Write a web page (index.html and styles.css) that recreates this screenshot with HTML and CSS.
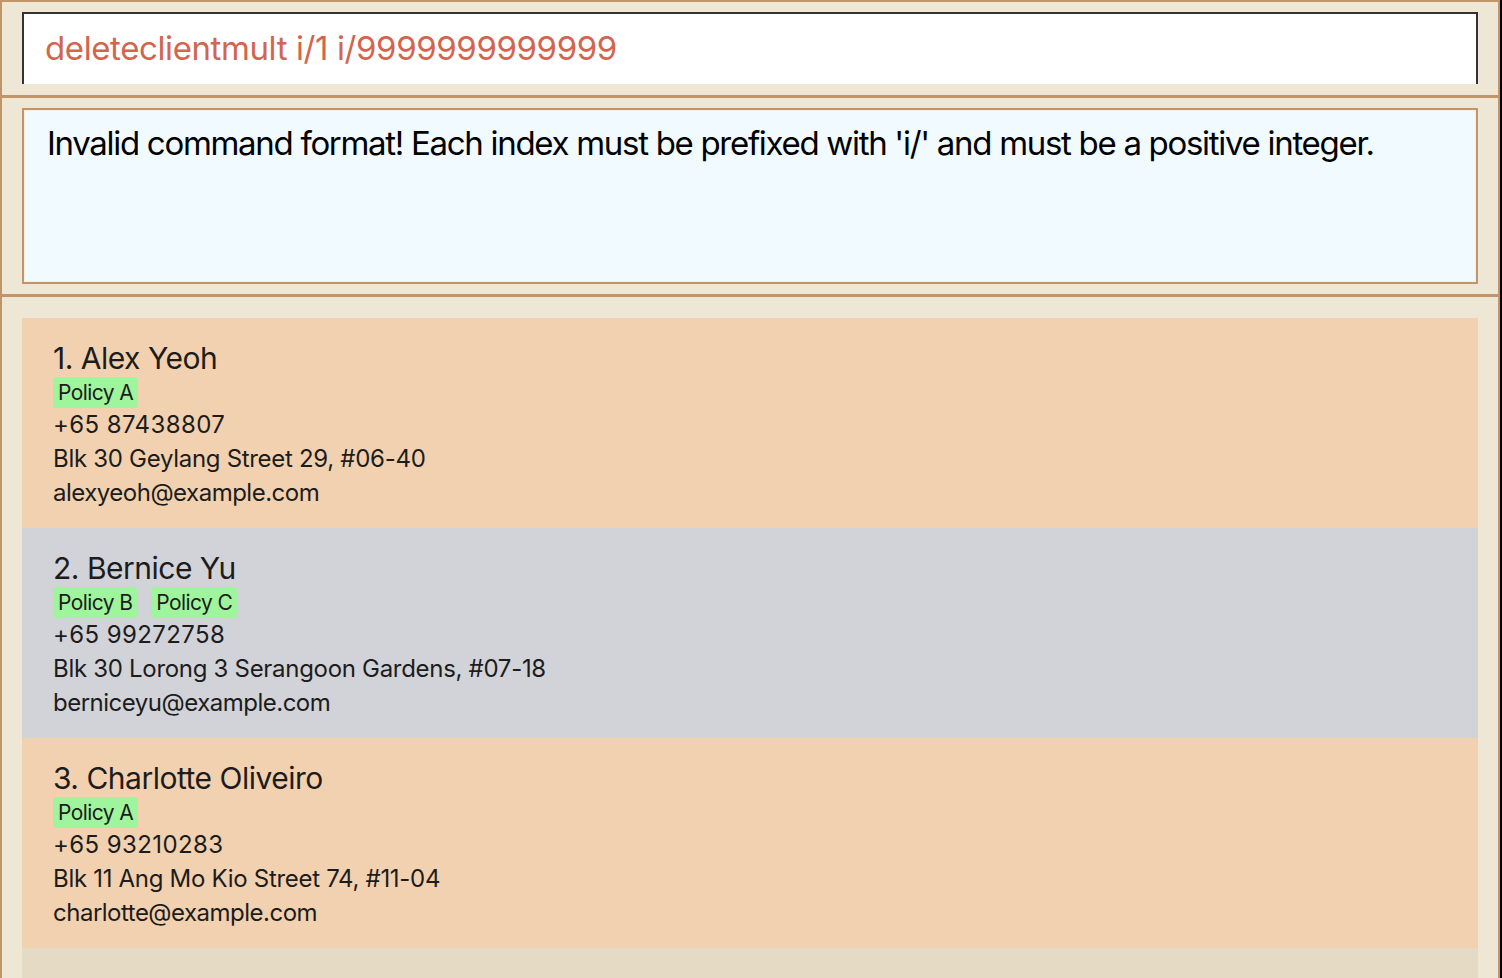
FILE: index.html
```html
<!DOCTYPE html>
<html>
<head>
<meta charset="utf-8">
<link rel="stylesheet" href="styles.css">
</head>
<body>
<div class="window">
  <div class="cmd-pane">
    <div class="cmd-box">deleteclientmult i/1 i/9999999999999</div>
  </div>
  <div class="sep"></div>
  <div class="result-pane">
    <div class="result-box">Invalid command format! Each index must be prefixed with 'i/' and must be a positive integer.</div>
  </div>
  <div class="sep"></div>
  <div class="list-pane">
    <div class="list">
      <div class="card odd">
        <div class="name">1. Alex Yeoh</div>
        <div class="tags"><span class="tag">Policy A</span></div>
        <div class="line phone">+65 87438807</div>
        <div class="line">Blk 30 Geylang Street 29, #06-40</div>
        <div class="line email">alexyeoh@example.com</div>
      </div>
      <div class="card even">
        <div class="name">2. Bernice Yu</div>
        <div class="tags"><span class="tag">Policy B</span><span class="tag">Policy C</span></div>
        <div class="line phone">+65 99272758</div>
        <div class="line">Blk 30 Lorong 3 Serangoon Gardens, #07-18</div>
        <div class="line email">berniceyu@example.com</div>
      </div>
      <div class="card odd">
        <div class="name">3. Charlotte Oliveiro</div>
        <div class="tags"><span class="tag">Policy A</span></div>
        <div class="line phone">+65 93210283</div>
        <div class="line">Blk 11 Ang Mo Kio Street 74, #11-04</div>
        <div class="line email">charlotte@example.com</div>
      </div>
      <div class="filler"></div>
    </div>
  </div>
</div>
</body>
</html>
```
FILE: styles.css
```css
html, body {
  margin: 0;
  padding: 0;
  width: 1502px;
  height: 978px;
  overflow: hidden;
  background: #000;
  font-family: Inter, "Noto Sans", sans-serif;
}
.window {
  box-sizing: border-box;
  width: 1500px;
  height: 978px;
  border-top: 2px solid #c1946a;
  border-left: 2px solid #c1946a;
  border-right: 2px solid #c1946a;
  background: #efe7d5;
  display: flex;
  flex-direction: column;
}
.cmd-pane {
  padding: 10px 20px 11px 20px;
}
.cmd-box {
  box-sizing: border-box;
  height: 72px;
  background: #fff;
  border: 2px solid #333;
  border-bottom: none;
  color: #d3654f;
  font-size: 33px;
  letter-spacing: -0.4px;
  padding: 14px 0 0 21px;
  line-height: 40px;
}
.sep {
  height: 3px;
  background: #c1946a;
}
.result-pane {
  padding: 10px 20px 10px 20px;
}
.result-box {
  box-sizing: border-box;
  height: 176px;
  border: 2px solid #c1946a;
  box-shadow: inset 0 0 0 1px #f6eee2;
  background: #f0faff;
  color: #000;
  font-size: 33px;
  letter-spacing: -1.3px;
  padding: 13px 0 0 23px;
  line-height: 40px;
}
.list-pane {
  flex: 1;
  padding: 21px 20px 0 20px;
  display: flex;
  flex-direction: column;
}
.list {
  flex: 1;
  display: flex;
  flex-direction: column;
}
.card {
  box-sizing: border-box;
  height: 210px;
  padding: 22px 0 0 31px;
  color: #1c1c1c;
}
.odd { background: #f2d1b0; }
.even { background: #d1d3d8; }
.filler {
  flex: 1;
  background: #e5dac4;
}
.name {
  font-size: 30px;
  line-height: 36px;
  letter-spacing: -0.5px;
}
.tags {
  display: flex;
  gap: 14px;
  height: 32px;
  align-items: center;
}
.tag {
  background: #9ff59c;
  border-radius: 3px;
  font-size: 21px;
  line-height: 31px;
  padding: 0 5px;
  letter-spacing: -0.6px;
}
.line {
  font-size: 24px;
  line-height: 34px;
  letter-spacing: -0.3px;
}
.phone {
  letter-spacing: 0.4px;
}
.email {
  letter-spacing: -0.5px;
}
```
